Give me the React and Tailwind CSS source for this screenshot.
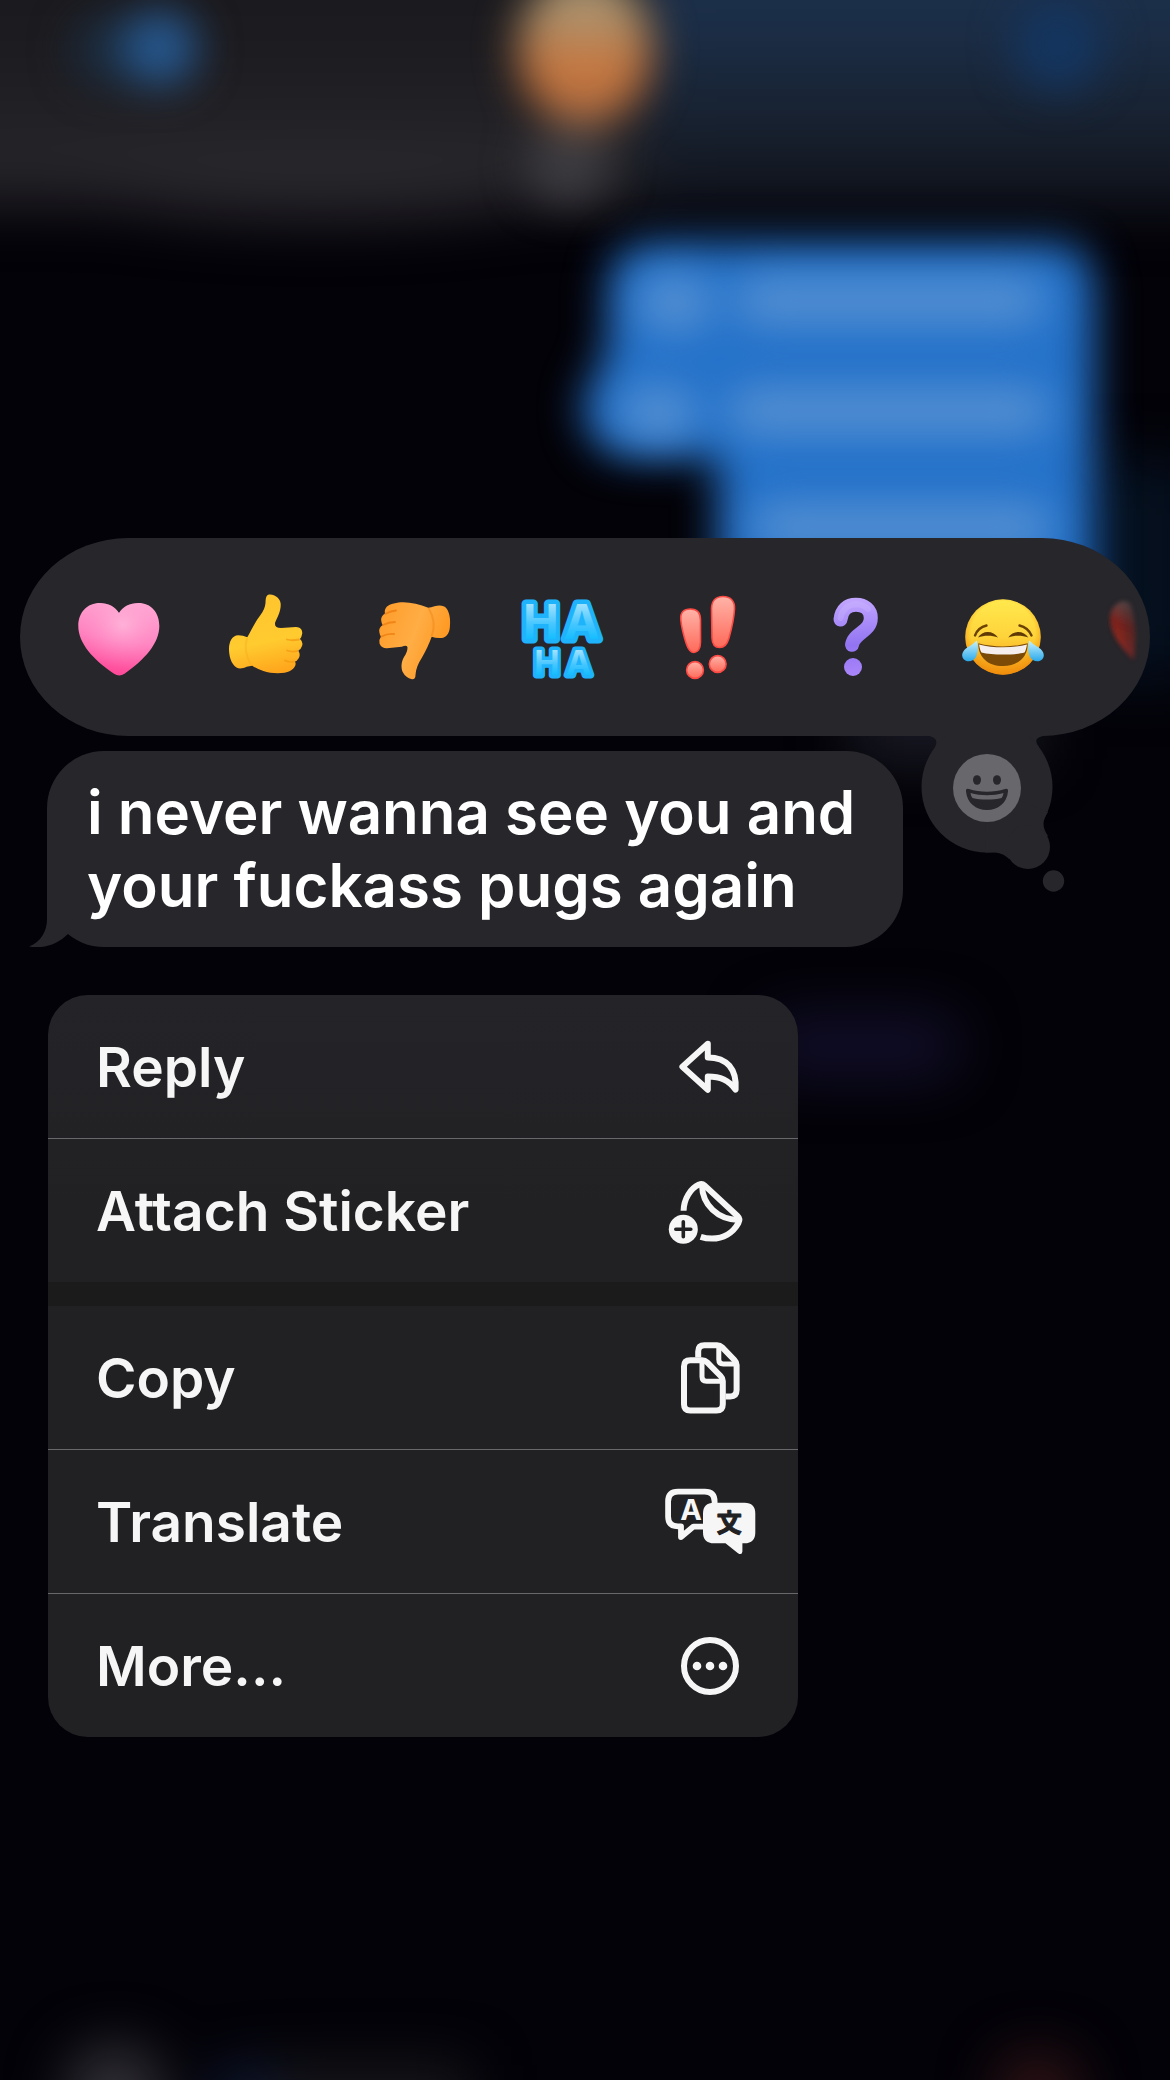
import React from 'react';

// Out-of-focus conversation behind the context menu
const Backdrop = () => (
  <svg
    className="absolute inset-0 h-full w-full"
    viewBox="0 0 1170 2080"
    preserveAspectRatio="xMidYMin slice"
    aria-hidden="true"
  >
    <defs>
      <linearGradient id="barLeft" x1="0" y1="0" x2="0" y2="1">
        <stop offset="0.4" stopColor="#1b1a1e" />
        <stop offset="0.9" stopColor="#26252a" />
      </linearGradient>
      <linearGradient id="barRight" x1="0" y1="0" x2="0" y2="1">
        <stop offset="0.35" stopColor="#1c304b" />
        <stop offset="0.7" stopColor="#182231" />
        <stop offset="1" stopColor="#11131b" />
      </linearGradient>
      <linearGradient id="avatar" x1="0" y1="0" x2="0" y2="1">
        <stop offset="0.25" stopColor="#aa9370" />
        <stop offset="0.65" stopColor="#c9753c" />
        <stop offset="1" stopColor="#a86c45" />
      </linearGradient>
      <filter id="soft" filterUnits="userSpaceOnUse" x="-100" y="-200" width="1370" height="2480" colorInterpolationFilters="sRGB">
        <feGaussianBlur stdDeviation="21" />
      </filter>
      <filter id="softer" filterUnits="userSpaceOnUse" x="-100" y="-200" width="1370" height="2480" colorInterpolationFilters="sRGB">
        <feGaussianBlur stdDeviation="28" />
      </filter>
    </defs>

    <g filter="url(#softer)">
      <rect x="-90" y="-100" width="740" height="305" fill="url(#barLeft)" />
      <rect x="640" y="-100" width="620" height="310" fill="url(#barRight)" />
      <ellipse cx="320" cy="182" rx="260" ry="38" fill="#28272c" />
    </g>
    <g filter="url(#soft)">
      <ellipse cx="112" cy="50" rx="40" ry="36" fill="#1b2b3d" />
      <circle cx="160" cy="48" r="38" fill="#26588f" />
      <circle cx="1058" cy="45" r="46" fill="#14355f" />
      <ellipse cx="568" cy="165" rx="44" ry="38" fill="#3c3b40" />
      <ellipse cx="585" cy="48" rx="67" ry="78" fill="url(#avatar)" />
    </g>

    <g filter="url(#softer)">
      <rect x="1080" y="460" width="120" height="220" fill="#05101f" />
      <rect x="850" y="700" width="190" height="60" fill="#1b1c26" />
      <rect x="760" y="1015" width="200" height="62" rx="30" fill="#120f2a" />
    </g>
    <g filter="url(#soft)">
      <path
        d="M660 243H1050Q1094 243 1094 290V640H718V458H640Q584 458 582 400Q602 370 608 340V290Q608 243 660 243Z"
        fill="#2472ca"
      />
    </g>
    <g filter="url(#soft)" fill="#5590d2">
      <rect x="638" y="276" width="74" height="54" rx="27" />
      <rect x="735" y="278" width="310" height="46" rx="23" />
      <rect x="620" y="388" width="76" height="50" rx="25" />
      <rect x="728" y="388" width="322" height="46" rx="23" />
      <rect x="752" y="504" width="300" height="46" rx="23" />
    </g>

    <g filter="url(#softer)">
      <circle cx="115" cy="2095" r="50" fill="#333238" />
      <circle cx="245" cy="2100" r="34" fill="#101c38" />
      <rect x="270" y="2065" width="200" height="90" fill="#17171b" />
      <circle cx="1038" cy="2095" r="42" fill="#331517" />
    </g>
  </svg>
);

const Heart = () => (
  <svg viewBox="0 0 87 88" className="h-[88px] w-[87px]">
    <defs>
      <linearGradient id="heartFill" x1="0.6" y1="0" x2="0.4" y2="1">
        <stop offset="0" stopColor="#ffa6d3" />
        <stop offset="0.5" stopColor="#ff80be" />
        <stop offset="1" stopColor="#ff4596" />
      </linearGradient>
      <radialGradient id="heartGlow" cx="0.55" cy="0.3" r="0.6">
        <stop offset="0" stopColor="#ffbfe0" stopOpacity="0.7" />
        <stop offset="1" stopColor="#ff8cc6" stopOpacity="0" />
      </radialGradient>
    </defs>
    {['url(#heartFill)', 'url(#heartGlow)'].map((fill) => (
      <path
        key={fill}
        fill={fill}
        d="M43 20C39 13.5 32 10 24 10C11 10 2.3 19.5 2.3 33C2.3 50 17 66.5 38 80.8Q43.3 84.3 48.5 80.8C69 66.5 83.3 50 83.3 33C83.3 19.5 75 10 62.3 10C54 10 47 13.5 43 20Z"
      />
    ))}
  </svg>
);

const ThumbsUp = () => (
  <svg viewBox="0 0 87 88" className="h-[88px] w-[87px]">
    <defs>
      <linearGradient id="upFill" x1="0.4" y1="0" x2="0.6" y2="1">
        <stop offset="0" stopColor="#ffc42e" />
        <stop offset="0.6" stopColor="#ffcb2f" />
        <stop offset="1" stopColor="#ffa51c" />
      </linearGradient>
    </defs>
    <path
      fill="url(#upFill)"
      d="M44.7 2C50 0 57.5 5 57.7 11C58 19 54 25 52 30Q51.5 35 58 35L73 34C78 34 80 38 79 41.5Q78.5 44.5 77 46Q80.5 49 79 53Q78 56.5 75.3 57.5Q78 62 75.5 65.5Q74 68 72 68.5C74 72 71 76 67 78C61 81 49 81 40.3 78Q34 76 29.3 72.7Q26 73 23.7 73.7C20 75.5 16 76 13.5 74.5C8 71 6 63 6 56C6 49 9 42.5 15.3 42.3Q20 42.5 24.3 44.3C28 38 32 29 37.5 22Q42 16 42.5 10Q42.5 3 44.7 2Z"
    />
    <path
      d="M76 46.5Q69 48 64 46.5M75 57.8Q69 59.5 64 57.5M71 68.7Q66 69.5 62 67.5"
      fill="none"
      stroke="#f39a12"
      strokeWidth="1.8"
      strokeLinecap="round"
      opacity="0.75"
    />
    <path d="M24 45Q20 58 28 72" fill="none" stroke="#f7a81c" strokeWidth="2" opacity="0.4" />
  </svg>
);

const ThumbsDown = () => (
  <svg viewBox="0 0 87 88" className="h-[88px] w-[87px]">
    <defs>
      <linearGradient id="downFill" x1="0" y1="0.2" x2="1" y2="0.6">
        <stop offset="0" stopColor="#ff9d2b" />
        <stop offset="0.5" stopColor="#ffad45" />
        <stop offset="1" stopColor="#ff941a" />
      </linearGradient>
    </defs>
    <path
      fill="url(#downFill)"
      d="M33.3 9.3C27 9.3 20 11 16.7 13.7Q14 17 15 20.5Q10.5 23 11.3 28Q11.5 30.5 12.7 32Q8.5 35 9.3 39Q9.7 42 11 43.5Q8.5 47 9.5 50.5Q11.5 55.5 17 55.3L31.7 53.7Q37.5 51.5 37.5 54.5Q37.5 59 34 64C31 69 31 75 32.7 79Q35.5 84.5 42 86.3Q45.5 86.5 45.5 82C45.8 76 48 71 51.7 65C55.5 58.5 59 51 61.7 43.7Q66 45.5 71.7 45C76 44.5 79 41 79.8 35C80.7 28 80 20 76.5 15.5C74 12 69 12 64.5 13.2Q61 14.5 58.3 14.7C50 11.5 41 9.3 33.3 9.3Z"
    />
    <path
      d="M15.5 20.7Q21 18 26 17.5M12.9 32Q19 29 25 29M11.5 43.5Q17 40.5 24 41"
      fill="none"
      stroke="#e9780c"
      strokeWidth="1.8"
      strokeLinecap="round"
      opacity="0.7"
    />
    <path d="M58.5 15Q67 29 61.7 43" fill="none" stroke="#e9780c" strokeWidth="2" opacity="0.35" />
  </svg>
);

const HaHa = () => (
  <svg viewBox="0 0 87 88" className="h-[88px] w-[87px] overflow-visible font-['Inter',sans-serif] font-bold">
    <defs>
      <linearGradient id="haFill" x1="0" y1="0" x2="0" y2="1">
        <stop offset="0.2" stopColor="#a2e2ff" />
        <stop offset="0.55" stopColor="#45c6ff" />
        <stop offset="0.9" stopColor="#00baff" />
      </linearGradient>
    </defs>
    <g fill="url(#haFill)" stroke="#1fb3fb" strokeLinejoin="round" textAnchor="middle" paintOrder="stroke">
      <text y="46" fontSize="48" strokeWidth="9">
        <tspan x="24">H</tspan>
        <tspan x="65">A</tspan>
      </text>
      <text y="82" fontSize="34" strokeWidth="7">
        <tspan x="30">H</tspan>
        <tspan x="62">A</tspan>
      </text>
    </g>
  </svg>
);

const Exclaim = () => (
  <svg viewBox="0 0 87 88" className="h-[88px] w-[87px]">
    <defs>
      <linearGradient id="bangFill" x1="0" y1="0" x2="0" y2="1">
        <stop offset="0" stopColor="#ffb3a8" />
        <stop offset="1" stopColor="#ff6a5a" />
      </linearGradient>
    </defs>
    <g fill="url(#bangFill)" stroke="#fb4a44" strokeWidth="1.6">
      <path d="M16.8 27C16 19 20 16 26.5 16C33.5 16 36.5 20 36.5 27V49C36.5 56 33.5 59.5 30 59.5C26.5 59.5 24 56 22 50C19.5 42 17.5 34 16.8 27Z" />
      <path d="M47.5 16C47.5 8 51.5 3.5 59 3.5C67 3.5 71 8.5 70.5 16C70 26 67.5 36 65 45C63 52 60 54.5 55.7 54.5C51 54.5 48.2 51 48 45Z" />
      <circle cx="31" cy="77" r="8.4" />
      <circle cx="53.7" cy="71" r="8.4" />
    </g>
  </svg>
);

const Question = () => (
  <svg viewBox="0 0 87 88" className="h-[88px] w-[87px]">
    <defs>
      <linearGradient id="askFill" gradientUnits="userSpaceOnUse" x1="40" y1="4" x2="44" y2="84">
        <stop offset="0" stopColor="#c4a8ff" />
        <stop offset="0.6" stopColor="#9274f2" />
        <stop offset="1" stopColor="#ab86fa" />
      </linearGradient>
    </defs>
    <path
      d="M29.5 26.5C30.5 16.5 36.5 11.8 45 11.8C53.5 11.8 59.8 17 59.8 25C59.8 39 43 39.5 41 51.8"
      fill="none"
      stroke="url(#askFill)"
      strokeWidth="14"
      strokeLinecap="round"
    />
    <path
      d="M29.5 25C31.5 16.5 37 11.5 45 11.3C50 11.3 54 13 57 16"
      fill="none"
      stroke="#d6c2ff"
      strokeWidth="6"
      strokeLinecap="round"
      opacity="0.25"
    />
    <circle cx="42" cy="74" r="9" fill="url(#askFill)" />
  </svg>
);

const TearsOfJoy = () => (
  <svg viewBox="0 0 87 88" className="h-[88px] w-[87px]">
    <defs>
      <linearGradient id="faceFill" x1="0" y1="0" x2="0" y2="1">
        <stop offset="0" stopColor="#ffe94d" />
        <stop offset="0.5" stopColor="#fed33a" />
        <stop offset="1" stopColor="#f08f0c" />
      </linearGradient>
      <radialGradient id="faceRim" cx="0.5" cy="0.45" r="0.56">
        <stop offset="0.75" stopColor="#f59d12" stopOpacity="0" />
        <stop offset="1" stopColor="#ee8a0b" stopOpacity="0.8" />
      </radialGradient>
      <linearGradient id="tearFill" x1="0" y1="0" x2="0" y2="1">
        <stop offset="0" stopColor="#c8f3ff" />
        <stop offset="1" stopColor="#2aa9ea" />
      </linearGradient>
    </defs>
    <circle cx="45" cy="44" r="37.7" fill="url(#faceFill)" />
    <circle cx="45" cy="44" r="37.7" fill="url(#faceRim)" />
    <g fill="none" stroke="#6b4205" strokeWidth="2.4" strokeLinecap="round">
      <path d="M17 42.5Q20 34.5 28.5 32.5" />
      <path d="M61.5 32.5Q70 34.5 73.5 42.5" />
    </g>
    <g fill="#5f3a05">
      <path d="M20 44.6C24 37 35.5 37 40 44.6C34 42.2 26 42.2 20 44.6Z" />
      <path d="M50.3 44.6C54.5 37 66 37 70.3 44.6C64 42.2 56 42.2 50.3 44.6Z" />
    </g>
    <path d="M20.3 50.3C35 54.5 55 54.5 69.7 50.3C70 64 60 73 45 73C30 73 20 64 20.3 50.3Z" fill="#7a4a06" />
    <path d="M21 51.5C35 55.3 55 55.3 69 51.5Q68 57.5 66.5 59.5C56 62.3 34 62.3 23.5 59.5Q22 57.5 21 51.5Z" fill="#f4eeee" />
    <path d="M18.7 47.5C20.5 54 20 59 18.2 63.5C16 68.5 9 70 5.5 66C2.5 62 5 57 9.5 54.5Q15 51.5 18.7 47.5Z" fill="url(#tearFill)" />
    <path d="M71.3 47.5C69.5 54 70 59 71.8 63.5C74 68.5 81 70 84.5 66C87.5 62 85 57 80.5 54.5Q75 51.5 71.3 47.5Z" fill="url(#tearFill)" />
  </svg>
);

const FadedHeart = () => (
  <svg viewBox="0 0 87 88" className="h-[88px] w-[87px]">
    <defs>
      <linearGradient id="fadedFill" gradientUnits="userSpaceOnUse" x1="6" y1="50" x2="22" y2="8">
        <stop offset="0" stopColor="#8e2620" />
        <stop offset="0.5" stopColor="#79241f" />
        <stop offset="1" stopColor="#564848" />
      </linearGradient>
      <linearGradient id="fadedMask" gradientUnits="userSpaceOnUse" x1="14" y1="0" x2="36" y2="0">
        <stop offset="0" stopColor="#fff" />
        <stop offset="1" stopColor="#555" />
      </linearGradient>
      <mask id="fadeOut">
        <rect width="87" height="88" fill="url(#fadedMask)" />
      </mask>
      <filter id="fadedBlur" x="-30%" y="-30%" width="160%" height="160%">
        <feGaussianBlur stdDeviation="2.2" />
      </filter>
    </defs>
    <path
      d="M19 8C9 10 4 18 5 28C6 40 15 54 29 67C32 50 32 30 26 12Q23 8 19 8Z"
      fill="url(#fadedFill)"
      mask="url(#fadeOut)"
      filter="url(#fadedBlur)"
    />
  </svg>
);

const reactions = [
  { label: 'Heart', Icon: Heart },
  { label: 'Thumbs up', Icon: ThumbsUp },
  { label: 'Thumbs down', Icon: ThumbsDown },
  { label: 'Haha', Icon: HaHa },
  { label: 'Exclamation', Icon: Exclaim },
  { label: 'Question', Icon: Question },
  { label: 'Tears of joy', Icon: TearsOfJoy },
  { label: 'Red heart', Icon: FadedHeart },
];

const ReactionBar = () => (
  <section className="relative mx-5">
    <div className="flex h-[198px] items-center overflow-hidden rounded-[108px/99px] bg-[#27262b] pl-[26px]">
      {reactions.map(({ label, Icon }) => (
        <button key={label} type="button" aria-label={label} className="flex w-[147px] shrink-0 justify-center">
          <Icon />
        </button>
      ))}
    </div>

    {/* thought bubble hanging off the bar */}
    <button type="button" aria-label="More reactions" className="absolute top-[197px] right-[75px]">
      <svg viewBox="0 0 160 160" className="h-40 w-40">
        <g fill="#27262b">
          <path d="M8 0C19 1 24 4 20 12L72 52L124 12C118 4 122 1 136 0Z" />
          <circle cx="72" cy="52" r="65.5" />
          <path d="M70 117.5C84 117 88 118 94 124L113 112L133 101C127 92 127 86 133 77L72 52Z" />
          <circle cx="113" cy="112" r="22" />
          <circle cx="138.5" cy="146" r="10.7" />
        </g>
        <circle cx="72" cy="53" r="34" fill="#68676c" />
        <g fill="#27262b">
          <ellipse cx="62" cy="45" rx="4" ry="4.8" />
          <ellipse cx="82" cy="45" rx="4" ry="4.8" />
          <path d="M51 56.5Q50.5 53 54 54C65 57.5 79 57.5 90 54Q93.5 53 93 56.5C92 68 83 75 72 75C61 75 52 68 51 56.5Z" />
        </g>
        <path d="M55.5 58C66 61 78 61 88.5 58Q88 61.5 86.5 63C78 65 66 65 57.5 63Q56 61.5 55.5 58Z" fill="#68676c" />
      </svg>
    </button>
  </section>
);

const ReplyIcon = () => (
  <svg viewBox="0 0 96 79" className="h-[79px] w-24" fill="none" stroke="currentColor" strokeWidth="6" strokeLinejoin="round">
    <path d="M45.8 16.8L20.4 39.8L45.8 62.8V49.6C58.5 49.6 66.5 53 73.6 62.6C75 42 65 30.4 45.8 30.4Z" />
  </svg>
);

const StickerIcon = () => (
  <svg viewBox="0 0 96 79" className="h-[79px] w-24" fill="none" stroke="currentColor" strokeWidth="6" strokeLinejoin="round">
    <path d="M21.6 39.7C21.8 28 28.5 17.5 37 13.6Q40 12 42.5 14.4L75.5 45Q78.6 48 76.4 52C71 62 61 67.6 50 67.6Q44 67.6 38.7 65.8" />
    <path d="M40 14C40.2 34 56 48.7 76.5 48.9" />
    <circle cx="21.3" cy="58.3" r="14.5" fill="currentColor" stroke="none" />
    <path d="M13.8 58.3H28.8M21.3 50.8V65.8" stroke="#212123" strokeWidth="3.6" strokeLinecap="round" />
  </svg>
);

const CopyIcon = () => (
  <svg viewBox="0 0 96 79" className="h-[79px] w-24" fill="none" stroke="currentColor" strokeWidth="6" strokeLinejoin="round">
    <path d="M36.2 19.5V13.5Q36.2 7.2 42.5 7.2H55Q58 7.2 60.2 9.4L72.4 22Q74.6 24.2 74.6 27V52Q74.6 58.4 68.3 58.4H63.5" />
    <path d="M56.8 8V21.5Q56.8 26 61.3 26H73.5" strokeWidth="5" />
    <path d="M28.3 22.2H40Q43 22.2 45.2 24.4L58.6 38Q60.8 40.2 60.8 43V66.3Q60.8 72.6 54.5 72.6H28.3Q22 72.6 22 66.3V28.5Q22 22.2 28.3 22.2Z" />
    <path d="M40 23V38.7Q40 43.2 44.5 43.2H60" strokeWidth="5" />
  </svg>
);

const TranslateIcon = () => (
  <svg viewBox="0 0 96 79" className="h-[79px] w-24">
    <path
      d="M52.6 22V19.5Q52.6 9.6 42.7 9.6H16Q6.1 9.6 6.1 19.5V34.5Q6.1 44.3 16 44.3H19V55L31.5 44.6H42"
      fill="none"
      stroke="currentColor"
      strokeWidth="5.8"
      strokeLinejoin="round"
    />
    <path
      d="M52 20.7H82.5Q93.3 20.7 93.3 31.5V50.5Q93.3 61.3 82.5 61.3H80.4V69.5Q80 73.6 76 71.2L63.5 61.3H52Q41 61.3 41 50.5V31.5Q41 20.7 52 20.7Z"
      fill="currentColor"
    />
    <text
      x="29"
      y="38"
      fontSize="29"
      textAnchor="middle"
      fill="currentColor"
      className="font-['Inter',sans-serif] font-bold"
    >
      A
    </text>
    <text
      x="67.3"
      y="50"
      fontSize="25"
      textAnchor="middle"
      fill="#212123"
      stroke="#212123"
      strokeLinejoin="round"
      className="font-['Noto_Sans_CJK_JP',sans-serif] font-bold"
    >
      文
    </text>
  </svg>
);

const MoreIcon = () => (
  <svg viewBox="0 0 96 79" className="h-[79px] w-24" fill="currentColor">
    <circle cx="48" cy="40" r="26" fill="none" stroke="currentColor" strokeWidth="6" />
    <circle cx="35" cy="40" r="4.3" />
    <circle cx="48" cy="40" r="4.3" />
    <circle cx="61" cy="40" r="4.3" />
  </svg>
);

const menuGroups = [
  [
    { label: 'Reply', Icon: ReplyIcon },
    { label: 'Attach Sticker', Icon: StickerIcon },
  ],
  [
    { label: 'Copy', Icon: CopyIcon },
    { label: 'Translate', Icon: TranslateIcon },
    { label: 'More...', Icon: MoreIcon },
  ],
];

const ContextMenu = () => (
  <nav className="mt-12 ml-12 w-[750px] max-w-full divide-y-[24px] divide-[#1b1b1c] overflow-hidden rounded-[40px] bg-linear-to-b from-[#242328] via-[#212123] via-30% to-[#212123]">
    {menuGroups.map((group) => (
      <div key={group[0].label} className="divide-y divide-[#68676b]">
        {group.map(({ label, Icon }) => (
          <button
            key={label}
            type="button"
            className="box-content flex h-[143px] w-full items-center justify-between text-[55px] leading-[72px] font-semibold text-[#f6f6f6]"
          >
            <span className="pl-12">{label}</span>
            <span className="pr-10">
              <Icon />
            </span>
          </button>
        ))}
      </div>
    ))}
  </nav>
);

const MessageBubble = () => (
  <div className="relative mt-[15px] ml-[47px] w-[856px] max-w-full rounded-[57px] bg-[#27262b] px-10 py-[25px]">
    <svg viewBox="0 0 46 57" className="absolute bottom-0 -left-[18px] h-[57px] w-[46px]" aria-hidden="true">
      <path d="M18 0V29C18 41 12 52 0 56.5C14 59 28 55 39.5 43.5L46 20V0Z" fill="#27262b" />
    </svg>
    <p className="relative text-[60px] leading-[73px] font-semibold text-white">
      i never wanna see you and
      <br />
      your fuckass pugs again
    </p>
  </div>
);

const App = () => {
  return (
    <div className="relative min-h-screen overflow-hidden bg-[#030208] font-['Inter',sans-serif]">
      <Backdrop />
      <main className="relative pt-[538px] pb-12">
        <ReactionBar />
        <MessageBubble />
        <ContextMenu />
      </main>
    </div>
  );
};

export default App;
